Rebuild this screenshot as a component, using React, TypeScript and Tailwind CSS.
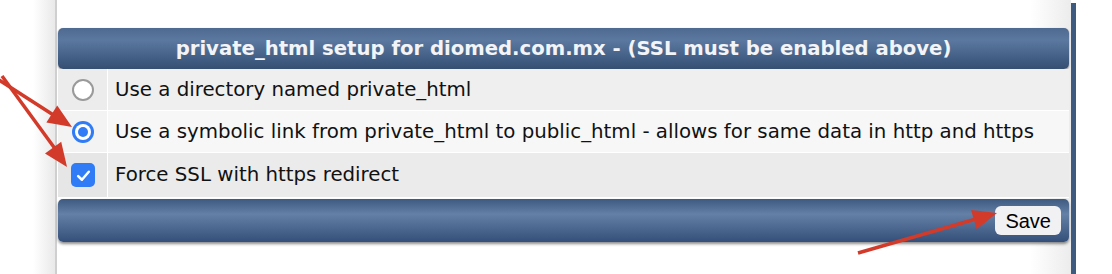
import React from "react";

const rowText = "text-[19.8px] text-[#111] font-['DejaVu_Sans',sans-serif] pl-[7px] flex items-center";

function Radio({ checked }: { checked: boolean }) {
  return checked ? (
    <div className="w-[22px] h-[22px] rounded-full bg-[#2f7cf6] flex items-center justify-center">
      <div className="w-[16px] h-[16px] rounded-full bg-white flex items-center justify-center">
        <div className="w-[10px] h-[10px] rounded-full bg-[#2f7cf6]" />
      </div>
    </div>
  ) : (
    <div className="w-[22px] h-[22px] rounded-full border-[2px] border-[#9a9a9a] bg-white" />
  );
}

function Checkbox() {
  return (
    <div className="w-[24px] h-[24px] rounded-[5px] bg-[#2f7cf6] flex items-center justify-center">
      <svg width="17" height="17" viewBox="0 0 16 16">
        <path d="M3 8.5 L6.5 12 L13 4.5" fill="none" stroke="white" strokeWidth="2.4" strokeLinecap="round" strokeLinejoin="round" />
      </svg>
    </div>
  );
}

function Row({ h, left, right, text, control }: { h: string; left: string; right: string; text: string; control: React.ReactNode }) {
  return (
    <div className={`flex ${h} border-b border-white`}>
      <div className={`w-[50px] ${left} flex items-center justify-center border-r border-white pl-[1px]`}>{control}</div>
      <div className={`flex-1 ${right} ${rowText}`}>{text}</div>
    </div>
  );
}

export default function App() {
  return (
    <div className="relative w-[1112px] h-[274px] bg-white flex overflow-hidden">
      <div className="w-[55px] bg-gradient-to-r from-white from-60% to-[#e9e9e9]" />
      <div className="w-[2px] bg-[#cfcfcf]" />
      <div className="w-[1014px] pl-[1px] pr-[2px] pt-[28px] bg-gradient-to-r from-white from-96% to-[#ececec]">
        <div className="h-[41px] rounded-[5px] bg-gradient-to-b from-[#4f6a90] via-[#5b78a0] via-30% to-[#354f73] shadow-[0_1px_2px_rgba(0,0,0,0.45)] flex items-center justify-center">
          <span className="text-[19.65px] font-bold text-[#f2f4f8] font-['DejaVu_Sans',sans-serif]">
            private_html setup for diomed.com.mx - (SSL must be enabled above)
          </span>
        </div>
        <Row h="h-[42px]" left="bg-[#ececec]" right="bg-[#efefef]" text="Use a directory named private_html" control={<Radio checked={false} />} />
        <Row h="h-[42px]" left="bg-[#f3f3f3]" right="bg-[#f7f7f7]" text="Use a symbolic link from private_html to public_html - allows for same data in http and https" control={<Radio checked={true} />} />
        <Row h="h-[45px]" left="bg-[#e6e6e6]" right="bg-[#ebebeb]" text="Force SSL with https redirect" control={<Checkbox />} />
        <div className="mt-[1px] h-[43px] rounded-[5px] bg-gradient-to-b from-[#3f5a80] via-[#6580a6] via-35% to-[#34507a] shadow-[0_2px_3px_rgba(0,0,0,0.45)] flex items-center justify-end pr-[8px]">
          <button className="h-[29px] px-[10px] rounded-[6px] bg-[#f1f1f3] text-[20px] text-black font-['Liberation_Sans',sans-serif] leading-none">
            Save
          </button>
        </div>
      </div>
      <div className="w-[5px] mt-[3px] bg-[#3e5a7e]" />
      <div className="flex-1 bg-white" />
      <svg className="absolute inset-0 pointer-events-none" width="1112" height="274" viewBox="0 0 1112 274">
        <g stroke="#d23a2a" strokeWidth="3.5" fill="none">
          <line x1="-4" y1="78" x2="55" y2="116" />
          <line x1="2" y1="76" x2="56" y2="150" />
          <line x1="858" y1="253" x2="976" y2="219" />
        </g>
        <g fill="#d23a2a">
          <polygon points="72,127 46.4,122.4 57.2,105.6" />
          <polygon points="67,167 45,153.4 61.2,141.8" />
          <polygon points="997,213 976.7,229.2 971.1,210" />
        </g>
      </svg>
    </div>
  );
}
